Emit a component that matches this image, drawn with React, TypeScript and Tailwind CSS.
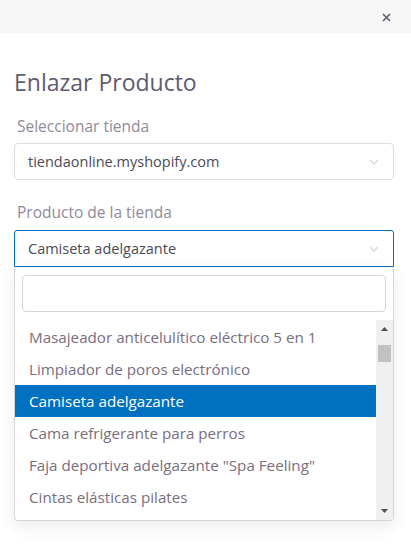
import React from "react";

const items = [
  "Masajeador anticelulítico eléctrico 5 en 1",
  "Limpiador de poros electrónico",
  "Camiseta adelgazante",
  "Cama refrigerante para perros",
  'Faja deportiva adelgazante "Spa Feeling"',
  "Cintas elásticas pilates",
];

function Chevron() {
  return (
    <svg width="10" height="6" viewBox="0 0 10 6" className="shrink-0">
      <path d="M1 1 L5 5 L9 1" fill="none" stroke="#d4d2dc" strokeWidth="1.2" />
    </svg>
  );
}

export default function App() {
  return (
    <div
      className="w-[411px] h-[545px] bg-white overflow-hidden"
      style={{ fontFamily: '"Open Sans", sans-serif' }}
    >
      <div className="h-[34px] bg-[#f7f7f7] flex items-center justify-end pr-[20px]">
        <svg width="9" height="9" viewBox="0 0 9 9">
          <path d="M1 1 L8 8 M8 1 L1 8" stroke="#5f5b6e" strokeWidth="1.6" />
        </svg>
      </div>
      <div className="pl-[14px] pr-[17px]">
        <div className="pt-[33px] text-[23px] leading-[30px] text-[#5e5b72]">Enlazar Producto</div>
        <div className="mt-[19px] ml-[3px] text-[15.5px] leading-[20px] text-[#8e8b99]">Seleccionar tienda</div>
        <div className="mt-[7px] h-[37px] border border-[#dddce3] rounded-[4px] flex items-center justify-between pl-[13px] pr-[14px]">
          <span className="text-[14.5px] text-[#4b4a57]">tiendaonline.myshopify.com</span>
          <Chevron />
        </div>
        <div className="mt-[22px] ml-[3px] text-[15.5px] leading-[20px] text-[#8e8b99]">Producto de la tienda</div>
        <div className="relative">
          <div className="mt-[8px] h-[37px] border border-[#0a6ec2] rounded-t-[3px] flex items-center justify-between pl-[13px] pr-[14px]">
            <span className="text-[14.5px] text-[#4b4a57]">Camiseta adelgazante</span>
            <Chevron />
          </div>
          <div className="h-[254px] border border-t-0 border-[#d6d5dd] rounded-b-[4px] bg-white shadow-[0_6px_16px_rgba(0,0,0,0.08)] flex flex-col">
            <div className="px-[7px] pt-[8px]">
              <div className="h-[37px] border border-[#d6d5dd] rounded-[4px]" />
            </div>
            <div className="mt-[8px] flex flex-1 min-h-0">
              <div className="flex-1 pt-[1px] overflow-hidden">
                {items.map((t) => {
                  const sel = t === "Camiseta adelgazante";
                  return (
                    <div
                      key={t}
                      className={
                        sel
                          ? "h-[32px] flex items-center pl-[14px] text-[15.2px] bg-[#0070c0] text-white whitespace-nowrap"
                          : "h-[32px] flex items-center pl-[14px] text-[15.2px] text-[#7a6e7e] whitespace-nowrap"
                      }
                    >
                      {t}
                    </div>
                  );
                })}
              </div>
              <div className="w-[17px] bg-[#f0f0f0] flex flex-col items-center">
                <div className="h-[18px] flex items-center justify-center">
                  <svg width="7" height="4" viewBox="0 0 7 4">
                    <path d="M0 4 L3.5 0 L7 4 Z" fill="#505050" />
                  </svg>
                </div>
                <div className="mt-[7px] w-[13px] h-[17px] bg-[#c1c1c1]" />
                <div className="flex-1" />
                <div className="h-[18px] flex items-center justify-center">
                  <svg width="7" height="4" viewBox="0 0 7 4">
                    <path d="M0 0 L3.5 4 L7 0 Z" fill="#505050" />
                  </svg>
                </div>
              </div>
            </div>
          </div>
        </div>
      </div>
    </div>
  );
}
